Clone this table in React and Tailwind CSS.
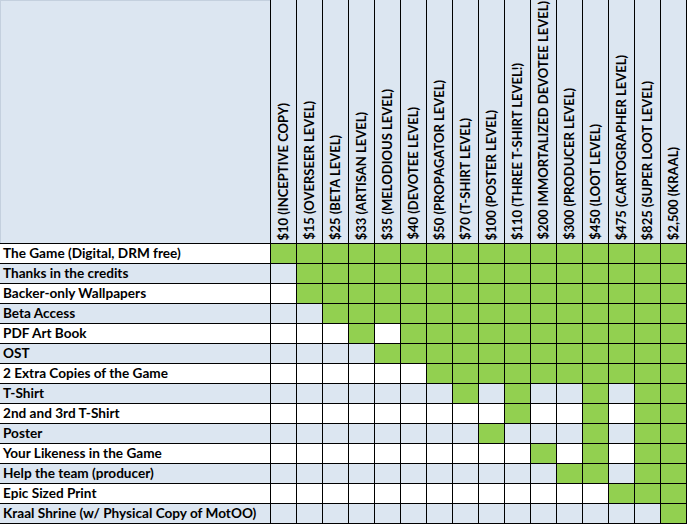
import React from 'react';

const tiers = [
  '$10 (INCEPTIVE COPY)',
  '$15 (OVERSEER LEVEL)',
  '$25 (BETA LEVEL)',
  '$33 (ARTISAN LEVEL)',
  '$35 (MELODIOUS LEVEL)',
  '$40 (DEVOTEE LEVEL)',
  '$50 (PROPAGATOR LEVEL)',
  '$70 (T-SHIRT LEVEL)',
  '$100 (POSTER LEVEL)',
  '$110 (THREE T-SHIRT LEVEL!)',
  '$200 IMMORTALIZED DEVOTEE LEVEL)',
  '$300 (PRODUCER LEVEL)',
  '$450 (LOOT LEVEL)',
  '$475 (CARTOGRAPHER LEVEL)',
  '$825 (SUPER LOOT LEVEL)',
  '$2,500 (KRAAL)',
];

const all = (from) => Array.from({ length: 16 - from }, (_, i) => from + i);

const rewards = [
  { name: 'The Game (Digital, DRM free)', on: all(0) },
  { name: 'Thanks in the credits', on: all(1) },
  { name: 'Backer-only Wallpapers', on: all(1) },
  { name: 'Beta Access', on: all(2) },
  { name: 'PDF Art Book', on: [3, ...all(5)] },
  { name: 'OST', on: all(4) },
  { name: '2 Extra Copies of the Game', on: all(6) },
  { name: 'T-Shirt', on: [7, 9, 12, 14, 15] },
  { name: '2nd and 3rd T-Shirt', on: [9, 12, 14, 15] },
  { name: 'Poster', on: [8, 12, 14, 15] },
  { name: 'Your Likeness in the Game', on: [10, 12, 14, 15] },
  { name: 'Help the team (producer)', on: [11, 12, 14, 15] },
  { name: 'Epic Sized Print', on: [13, 14, 15] },
  { name: 'Kraal Shrine (w/ Physical Copy of MotOO)', on: [15] },
];

export default function App() {
  return (
    <div className="w-[687px] h-[524px] bg-white font-['Lato',sans-serif] font-bold text-black">
      <div className="grid grid-cols-[270px_repeat(16,25px)] grid-rows-[243px_repeat(14,19px)] gap-px bg-black pr-px pb-px">
        {/* header */}
        <div className="bg-[#dce6f1] border-t border-l border-[#c4d0de]" />
        {tiers.map((t) => (
          <div key={t} className="bg-[#dce6f1] flex flex-col justify-end items-center pb-[3px]">
            <span className="[writing-mode:vertical-rl] rotate-180 text-[13px] leading-[15px] whitespace-nowrap">
              {t}
            </span>
          </div>
        ))}

        {/* rows */}
        {rewards.map((r, ri) => {
          const base = ri % 2 === 0 ? 'bg-white' : 'bg-[#dce6f1]';
          return (
            <React.Fragment key={r.name}>
              <div className={`${base} pl-[3px] text-[13.6px] leading-[19px] whitespace-nowrap`}>{r.name}</div>
              {tiers.map((t, ci) => (
                <div key={t} className={r.on.includes(ci) ? 'bg-[#92d050]' : base} />
              ))}
            </React.Fragment>
          );
        })}
      </div>
    </div>
  );
}
